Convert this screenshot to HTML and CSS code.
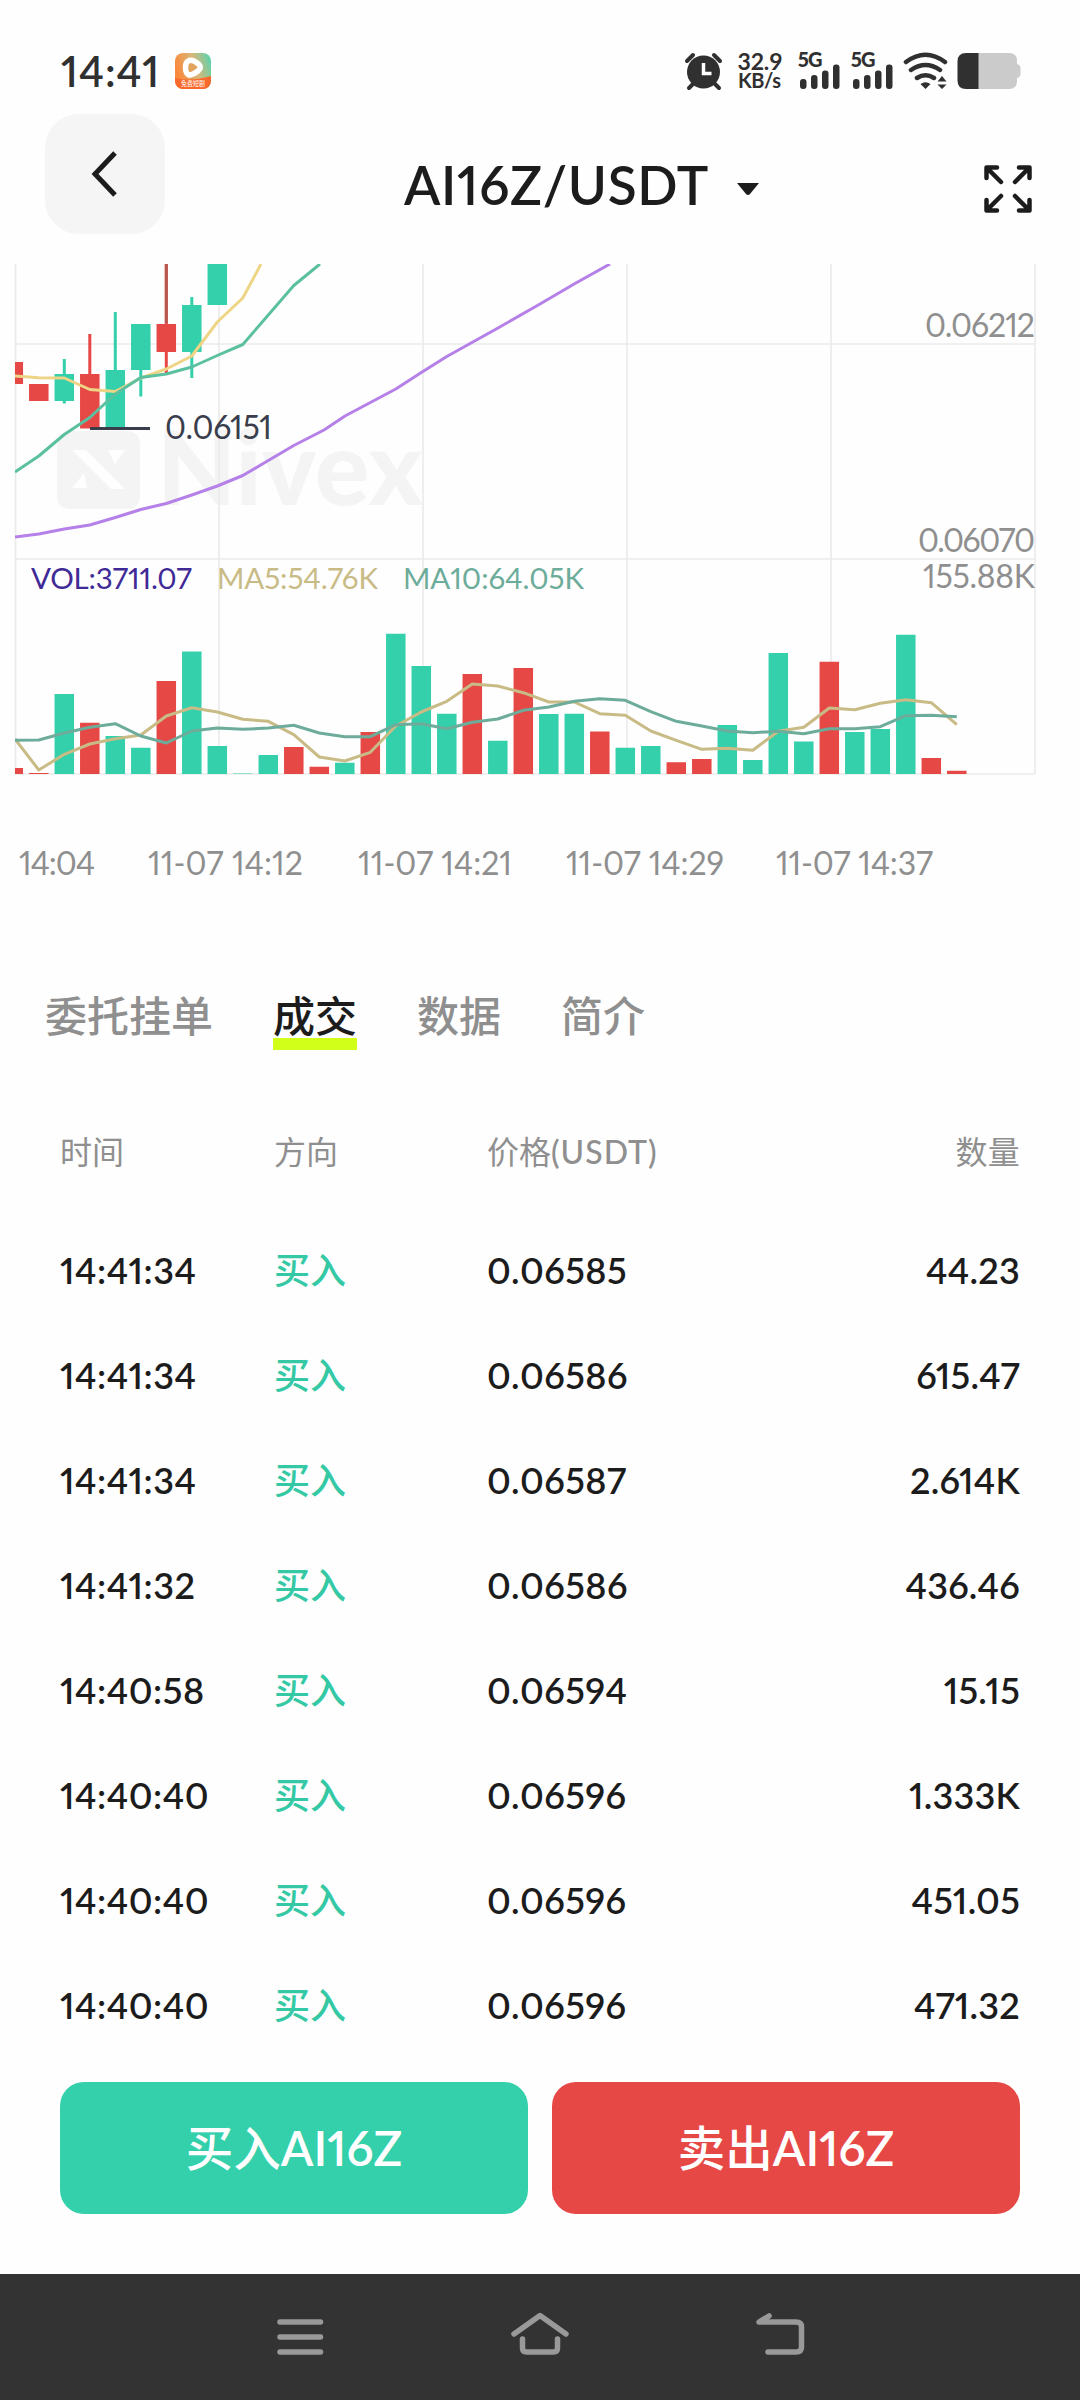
FILE: index.html
```html
<!DOCTYPE html>
<html lang="zh-CN">
<head>
<meta charset="utf-8">
<title>AI16Z/USDT</title>
<link rel="stylesheet" href="styles.css">
</head>
<body>
<header class="status">
  <span class="clock">14:41</span>
  <svg class="app-icon" width="36" height="36" viewBox="0 0 36 36">
    <defs>
      <linearGradient id="app" x1="0" y1=".3" x2="1" y2="0"><stop offset="0" stop-color="#f98a3c"/><stop offset=".5" stop-color="#d9b778"/><stop offset="1" stop-color="#4fd6b4"/></linearGradient>
      <clipPath id="appclip"><rect width="36" height="36" rx="8"/></clipPath>
    </defs>
    <g clip-path="url(#appclip)">
      <rect width="36" height="36" fill="url(#app)"/>
      <path d="M0 25Q16 29 36 23V36H0Z" fill="#f9692b"/>
      <path d="M14 7.500Q10.500 9 10.500 14Q10.500 21 14 22Q18 22 23.500 17.500Q27 14.500 23.500 11Q18 6.500 14 7.500Z" fill="#e2a35c" stroke="#fff" stroke-width="5.500" stroke-linejoin="round"/>
      <text x="6" y="33" class="app-label" textLength="24" lengthAdjust="spacingAndGlyphs">免费短剧</text>
    </g>
  </svg>
  <svg class="status-icons" width="340" height="50" viewBox="684 46 340 50">
    <g fill="#303030">
      <circle cx="703.500" cy="72" r="16.500"/>
      <path d="M687 61L693 55M720 61L714 55M693 84L689 88M715 84L719 88" stroke="#303030" stroke-width="4" stroke-linecap="round" fill="none"/>
      <path d="M703.500 63V73.500H711.500" fill="none" stroke="#fff" stroke-width="3.500"/>
      <text x="737.500" y="70" class="net" textLength="45">32.9</text>
      <text x="738" y="88" class="net net-unit" textLength="43">KB/s</text>
      <text x="797.500" y="67" class="net gen" textLength="25">5G</text>
      <text x="850.500" y="67" class="net gen" textLength="25">5G</text>
      <g id="bars">
        <rect x="800" y="79" width="6.500" height="10" rx="3"/><rect x="811" y="75" width="6.500" height="14" rx="3"/><rect x="822" y="70.500" width="6.500" height="18.500" rx="3"/><rect x="833" y="64.500" width="6.500" height="24.500" rx="3"/>
      </g>
      <use href="#bars" x="53"/>
      <path d="M906 62Q925.500 47.500 945 62M911 70Q925.500 60 940 70M917 78Q925.500 72.500 934 78" fill="none" stroke="#303030" stroke-width="4.500" stroke-linecap="round"/>
      <path d="M920.500 84Q925.500 80.500 930.500 84L925.500 89ZM937.500 81.500L942 76L946.500 81.500ZM937.500 84.500L942 89L946.500 84.500Z"/>
      <path d="M978 53H1009Q1017 53 1017 61V64Q1020.500 65 1020.500 68V74Q1020.500 77 1017 78V81Q1017 89 1009 89H978Z" fill="#cbcbcb"/>
      <path d="M978.500 53H966Q957.500 53 957.500 61.500V80.500Q957.500 89 966 89H978.500Z"/>
    </g>
  </svg>
</header>

<nav class="topbar">
  <button class="back" aria-label="返回"><svg width="30" height="48" viewBox="0 0 30 48"><path d="M25 3L5 24L25 45" fill="none" stroke="#1c1c1c" stroke-width="5"/></svg></button>
  <h1 class="pair"><span>AI16Z/USDT</span><svg width="22" height="13" viewBox="0 0 22 13"><path d="M0 0H22L13 11Q11 13 9 11Z" fill="#1c1c1c"/></svg></h1>
  <svg class="expand" width="50" height="50" viewBox="0 0 50 50" fill="none" stroke="#1c1c1c" stroke-width="4.500" stroke-linecap="round" stroke-linejoin="round"><path d="M3.500 14V3.500H14M4 4L18 18M36 3.500H46.500V14M46 4L32 18M3.500 36V46.500H14M4 46L18 32M36 46.500H46.500V36M46 46L32 32"/></svg>
</nav>

<svg class="chart" width="1080" height="640" viewBox="0 264 1080 640">
  <defs><clipPath id="plot"><rect x="15" y="264" width="1021" height="511"/></clipPath></defs>
  <g fill="#f4f4f4">
    <path fill-rule="evenodd" d="M71 431H126Q140 431 140 445V495Q140 509 126 509H71Q57 509 57 495V445Q57 431 71 431ZM72 450H86L125 489H111ZM108 450H125L115 464ZM72 488L84 473L87 488Z"/>
    <text x="157" y="505" class="watermark" textLength="266" lengthAdjust="spacingAndGlyphs">Nivex</text>
  </g>
  <path d="M15.500 264V774M219 264V774M423 264V774M627 264V774M831 264V774M1035 264V774M15 344H1035M15 559H1035M15 774H1035" stroke="#ebebeb" stroke-width="1.700" fill="none"/>
  <g clip-path="url(#plot)" fill="none">
    <g stroke="#e64846">
      <path stroke-width="19.500" d="M13.300 362V384M38.800 384V401M89.800 374V428.500M166.300 324V352"/>
      <path stroke-width="3" d="M89.800 334V375M166.300 264V373"/>
    </g>
    <g stroke="#34d0ab">
      <path stroke-width="19.500" d="M64.300 374V401M115.300 370V427.500M140.800 324V370M191.800 305V352M217.300 264V305"/>
      <path stroke-width="3" d="M64.300 359V403.500M115.300 312V371M140.800 369V396.500M191.800 297V378"/>
    </g>
    <path d="M166.300 264V323" stroke="#b75850" stroke-width="3"/>
    <g stroke-width="3" stroke-linejoin="round">
      <polyline stroke="#eed586" points="15,376 38.800,377.700 64.300,378 89.800,389.500 115.300,391.500 140.800,378 166.300,369 191.800,356 217.300,322 242.800,298 261,264"/>
      <polyline stroke="#5bc0a0" points="15,472 38.800,456 64.300,434.500 89.800,417.500 115.300,394 140.800,377.500 166.300,374 191.800,367 217.300,355.500 242.800,344.500 293.800,285.500 320,264"/>
      <polyline stroke="#b581e8" points="15,537 38.800,534 64.300,529 89.800,525 115.300,517.500 140.800,509.500 166.300,503.500 191.800,495 217.300,486 242.800,475.500 268.300,460.500 293.800,445.500 324,430 345,416 395.800,389 421.300,372.500 446.800,356.500 498,328 540,304 575,283.500 610,264"/>
    </g>
    <path d="M90 428.500H150" stroke="#3a3d4b" stroke-width="3"/>
    <path stroke="#e64846" stroke-width="19.500" d="M13.300 774V768M38.800 774V773M89.800 774V722.700M166.300 774V681M293.800 774V747M319.300 774V766.700M370.300 774V732M472.300 774V674M523.300 774V668M599.800 774V731.500M676.300 774V762.300M701.800 774V759M829.300 774V661.700M931.300 774V758M956.800 774V770.700"/>
    <path stroke="#34d0ab" stroke-width="19.500" d="M64.300 774V694M115.300 774V736M140.800 774V747.700M191.800 774V651.500M217.300 774V746M242.800 774V773.500M268.300 774V755M344.800 774V762.700M395.800 774V633.700M421.300 774V666M446.800 774V713.700M497.800 774V740.700M548.800 774V714M574.300 774V713.700M625.300 774V747.700M650.800 774V746M727.300 774V725M752.800 774V760M778.300 774V653M803.800 774V741.500M854.800 774V732M880.300 774V729M905.800 774V634.700"/>
    <g stroke-width="3" stroke-linejoin="round">
      <polyline stroke="#c9bb86" points="15,739 38.800,770 64.300,754.300 89.800,744 115.300,738.700 140.800,735 166.300,716 191.800,707.700 217.300,712 242.800,719.300 268.300,721.300 293.800,734.700 319.300,757 344.800,761 370.300,752.300 395.800,726 421.300,712 446.800,701.300 472.300,684 497.800,686 523.300,692.700 548.800,702 574.300,702 599.800,713.700 625.300,715.300 650.800,731 676.300,740.300 701.800,749.300 727.300,748.300 752.800,750.300 778.300,731.300 803.800,727.300 829.300,708 854.800,709.700 880.300,703.300 905.800,699.700 931.300,702.700 956.800,724.700"/>
      <polyline stroke="#6dac9a" points="15,740.300 38.800,740 64.300,733 89.800,727.300 115.300,723.700 140.800,736 166.300,743 191.800,731 217.300,728 242.800,729.300 268.300,728 293.800,725.300 319.300,733 344.800,736.700 370.300,736.700 395.800,724.700 421.300,723.700 446.800,728.700 472.300,722.300 497.800,719 523.300,710.300 548.800,707 574.300,701.300 599.800,698.700 625.300,700.300 650.800,711.700 676.300,721.300 701.800,726 727.300,731 752.800,732.700 778.300,731.300 803.800,733.700 829.300,728.700 854.800,728.700 880.300,726.700 905.800,715.700 931.300,715.300 956.800,716.700"/>
    </g>
  </g>
  <text x="165" y="438.500" class="low" textLength="107">0.06151</text>
  <g class="axis">
    <text x="925" y="336.500" textLength="110">0.06212</text>
    <text x="918" y="551.500" textLength="117">0.06070</text>
    <text x="923" y="587.500" textLength="112">155.88K</text>
    <text x="19" y="874.500" textLength="76">14:04</text>
    <text x="148" y="874.500" textLength="155">11-07 14:12</text>
    <text x="358" y="874.500" textLength="154">11-07 14:21</text>
    <text x="566" y="874.500" textLength="158">11-07 14:29</text>
    <text x="776" y="874.500" textLength="157">11-07 14:37</text>
  </g>
  <g class="legend">
    <text x="31" y="589" fill="#3f2a96" textLength="161">VOL:3711.07</text>
    <text x="217" y="589" fill="#c9bb86" textLength="161">MA5:54.76K</text>
    <text x="403" y="589" fill="#6dac9a" textLength="181">MA10:64.05K</text>
  </g>
</svg>

<div class="tabs">
  <span>委托挂单</span><span class="active">成交</span><span>数据</span><span>简介</span>
</div>

<main class="trades">
  <div class="row head"><span>时间</span><span>方向</span><span>价格<i>(USDT)</i></span><span>数量</span></div>
  <div class="row"><span>14:41:34</span><span class="buy">买入</span><span>0.06585</span><span>44.23</span></div>
  <div class="row"><span>14:41:34</span><span class="buy">买入</span><span>0.06586</span><span>615.47</span></div>
  <div class="row"><span>14:41:34</span><span class="buy">买入</span><span>0.06587</span><span>2.614K</span></div>
  <div class="row"><span>14:41:32</span><span class="buy">买入</span><span>0.06586</span><span>436.46</span></div>
  <div class="row"><span>14:40:58</span><span class="buy">买入</span><span>0.06594</span><span>15.15</span></div>
  <div class="row"><span>14:40:40</span><span class="buy">买入</span><span>0.06596</span><span>1.333K</span></div>
  <div class="row"><span>14:40:40</span><span class="buy">买入</span><span>0.06596</span><span>451.05</span></div>
  <div class="row"><span>14:40:40</span><span class="buy">买入</span><span>0.06596</span><span>471.32</span></div>
</main>

<div class="actions">
  <button class="btn-buy"><b>买入</b>AI16Z</button>
  <button class="btn-sell"><b>卖出</b>AI16Z</button>
</div>

<footer class="navbar">
  <svg width="60" height="50" viewBox="270 2309 60 50"><path d="M280 2322H320.500M280 2337H320.500M280 2352H320.500"/></svg>
  <svg width="60" height="50" viewBox="510 2309 60 50"><path d="M514 2334L540 2315.500L566 2334M522.500 2339V2348Q522.500 2352 526.500 2352H553.500Q557.500 2352 557.500 2348V2339"/></svg>
  <svg width="60" height="50" viewBox="750 2309 60 50"><path d="M768 2352H796Q801.500 2352 801.500 2347V2327Q801.500 2322 796 2322H759L769 2316"/></svg>
</footer>
</body>
</html>
```
FILE: styles.css
```css
* { box-sizing: border-box; }

body {
  margin: 0;
  width: 1080px;
  height: 2400px;
  display: flex;
  flex-direction: column;
  background: #fefefe;
  color: #1c1c1c;
  font-family: Lato, "Noto Sans CJK SC", sans-serif;
  font-feature-settings: "pnum" 1;
}

button { border: 0; padding: 0; font: inherit; color: inherit; }
svg { display: block; flex: none; }

.status { height: 114px; padding: 26px 56px 0 61px; display: flex; align-items: flex-start; }
.clock { width: 114px; padding-top: 20px; font-size: 42px; line-height: 50px; font-weight: 600; color: #303030; letter-spacing: 0.9px; }
.app-icon { margin-top: 27px; }
.status-icons { margin: 20px 0 0 auto; }
.app-label { font-size: 7px; fill: #fff; }
.net { font: 700 23px Lato, sans-serif; }
.net-unit { font-size: 20px; }
.gen { font-size: 20px; font-weight: 900; }

.topbar { height: 150px; padding: 0 47px 0 45px; display: flex; align-items: flex-start; }
.back { width: 120px; height: 120px; border-radius: 34px; background: #f5f5f5; display: flex; align-items: center; justify-content: center; }
.pair { flex: 1; margin: 43px 0 0; padding-left: 239px; display: flex; align-items: center; gap: 28px; font-size: 53px; line-height: 56px; font-weight: 600; letter-spacing: 0.7px; }
.pair svg { margin-top: 8px; }
.expand { margin-top: 50px; }

.watermark { font: 900 102px Lato, sans-serif; }
.axis { font-size: 32px; fill: #8f8f8f; }
.low { font-size: 32px; fill: #3a3d4b; }
.legend { font-size: 29.500px; }

.tabs { height: 152px; padding: 82px 0 0 45px; display: flex; align-items: flex-start; gap: 60px; font-size: 42px; line-height: 60px; font-weight: 500; color: #8f8f8f; }
.tabs .active { color: #1c1c1c; background: linear-gradient(#d1ff19, #d1ff19) 0 52px / 100% 12px no-repeat; height: 64px; }

.trades { height: 1026px; padding: 0 60px; }
.row { height: 105px; display: grid; grid-template-columns: 214px 213px 1fr 150px; align-items: center; font-size: 36px; line-height: 52px; font-weight: 600; letter-spacing: 0.5px; }
.row span:last-child { text-align: right; white-space: nowrap; letter-spacing: 0.2px; }
.row.head { height: 161px; padding-top: 30px; font-size: 32px; font-weight: 400; letter-spacing: 0; color: #8f8f8f; }
.row i { font-style: normal; font-weight: 500; letter-spacing: 1px; }
.row .buy { color: #34c9a4; font-weight: 500; letter-spacing: 0; }

.actions { padding: 0 60px; height: 192px; display: flex; gap: 24px; }
.actions button { flex: 1; height: 132px; padding-bottom: 6px; border-radius: 24px; color: #fff; font-size: 47.500px; font-weight: 600; }
.actions b { font-weight: 500; }
.btn-buy { background: #34d0ab; }
.btn-sell { background: #e64846; }

.navbar { height: 126px; padding: 35px 270px 0; display: flex; justify-content: space-between; background: #333; }
.navbar svg { fill: none; stroke: #999; stroke-width: 5.500; stroke-linecap: round; stroke-linejoin: round; }
```
